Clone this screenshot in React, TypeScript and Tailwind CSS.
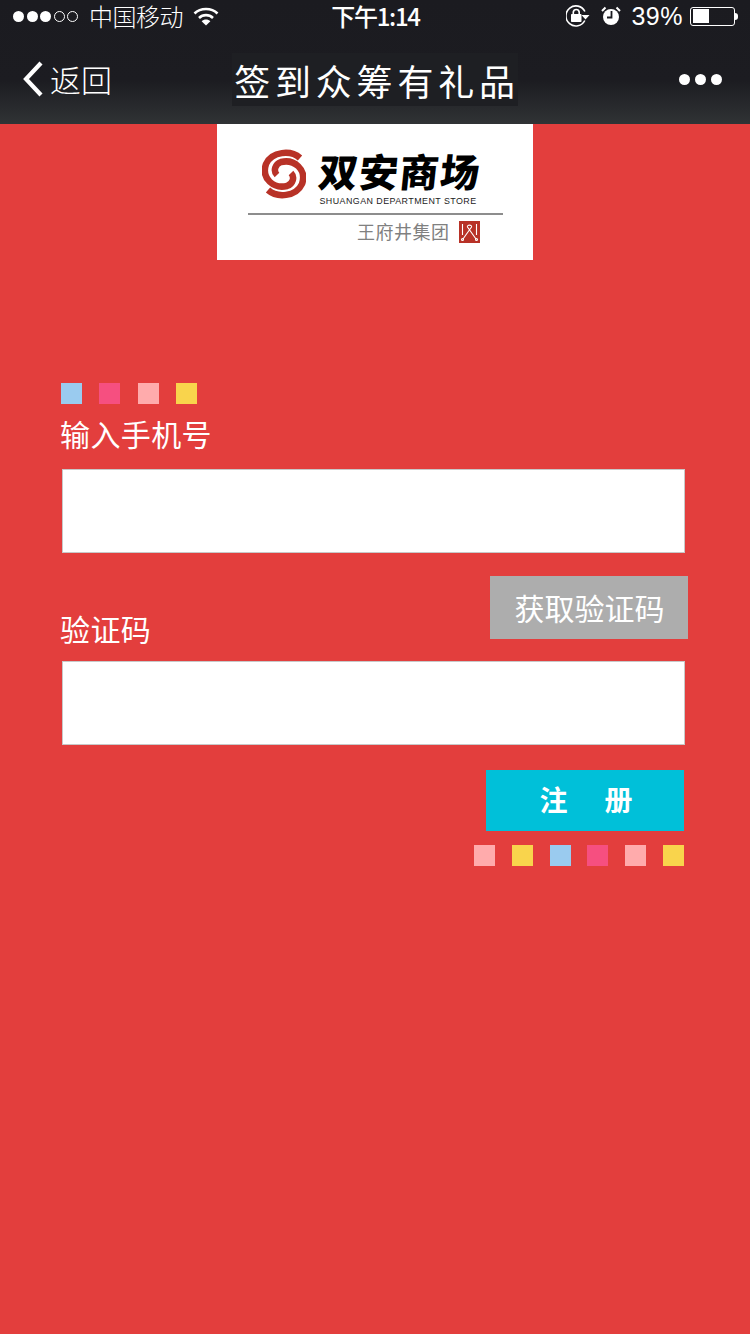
import React from 'react';

const CJK = "font-['Noto_Sans_CJK_SC','Noto_Sans',sans-serif]";

function Wifi() {
  return (
    <svg width="26" height="20" viewBox="0 0 26 20" className="text-white">
      <path d="M1.5 7.5C7.5 1.5 18.5 1.5 24.5 7.5" fill="none" stroke="currentColor" strokeWidth="2.6" />
      <path d="M6 12C10 8.2 16 8.2 20 12" fill="none" stroke="currentColor" strokeWidth="2.6" />
      <path d="M13 19.5L8.6 15.2C11 13 15 13 17.4 15.2Z" fill="currentColor" />
    </svg>
  );
}

function RotationLock() {
  return (
    <svg width="24" height="22" viewBox="0 0 24 22" className="text-white">
      <path d="M18.8 15.5A10 10 0 1 1 18.9 6.5" fill="none" stroke="currentColor" strokeWidth="1.6" />
      <path d="M15.5 10H23.5L19.5 14.5Z" fill="currentColor" />
      <rect x="5" y="9" width="10.5" height="8" rx="0.8" fill="currentColor" />
      <path d="M7.3 9V7A3 3 0 0 1 13.2 7V9" fill="none" stroke="currentColor" strokeWidth="1.6" />
    </svg>
  );
}

function Alarm() {
  return (
    <svg width="20" height="20" viewBox="0 0 20 20" className="text-white">
      <circle cx="10" cy="11" r="8" fill="currentColor" />
      <path d="M10.5 5V11.5H6" fill="none" stroke="#1b1b20" strokeWidth="1.8" />
      <path d="M1 5L4.5 1.5M19 5L15.5 1.5" stroke="currentColor" strokeWidth="2" />
    </svg>
  );
}

function Battery() {
  return (
    <div className="flex items-center">
      <div className="h-[19px] w-[45px] rounded-[3px] border border-white p-[1.5px]">
        <div className="h-full w-[16px] bg-white" />
      </div>
      <div className="h-[7px] w-[3px] rounded-r-sm bg-white" />
    </div>
  );
}

function BrandMark() {
  const arm = 'M38 9C29 1 10 2 4 15C-1 30 12 40 25 37C31 35 33 28 29 24';
  return (
    <svg width="44" height="50" viewBox="0 0 44 50" className="mt-[2px] shrink-0">
      <g fill="none" stroke="#b83227" strokeWidth="6.5">
        <path d={arm} />
        <path d={arm} transform="rotate(180 22 25)" />
      </g>
    </svg>
  );
}

function GroupBadge() {
  return (
    <svg width="21" height="22" viewBox="0 0 21 22">
      <rect width="21" height="22" fill="#b83227" />
      <g fill="none" stroke="#fff" strokeWidth="1.1">
        <path d="M3.5 3V14M17.5 3V14" />
        <path d="M4 18L12.5 6C13.5 3.5 7.5 3.5 8.5 6L17 18" />
        <circle cx="3.5" cy="18.5" r="1" />
        <circle cx="17.5" cy="18.5" r="1" />
      </g>
    </svg>
  );
}

function Logo() {
  return (
    <div className="mx-auto flex h-[136px] w-[316px] flex-col items-center bg-white pt-[23px]">
      <div className="flex h-[61px] w-[255px] gap-[13px] pl-[14px]">
        <BrandMark />
        <div className="flex w-[161px] flex-col">
          <div className={`${CJK} h-[49px] -skew-x-6 text-[39px] leading-[46px] font-black tracking-[1.5px] whitespace-nowrap text-black`}>双安商场</div>
          <div className="pl-[1px] font-['Liberation_Sans',sans-serif] text-[8.9px] leading-[10px] tracking-[0.45px] whitespace-nowrap text-[#222]">SHUANGAN DEPARTMENT STORE</div>
        </div>
      </div>
      <div className="mt-[5px] h-[2px] w-[255px] bg-[#8d8d8d]" />
      <div className="mt-[5px] flex h-[24px] w-[255px] items-center justify-end gap-[9px] pr-[23px]">
        <span className={`${CJK} mb-[2px] text-[18px] leading-[22px] tracking-[0.5px] text-[#808080]`}>王府井集团</span>
        <GroupBadge />
      </div>
    </div>
  );
}

export default function App() {
  return (
    <div className={`${CJK} flex min-h-[1334px] w-[750px] flex-col bg-[#e33e3d] text-white`}>
      {/* status bar + nav bar */}
      <header className="h-[124px] bg-[linear-gradient(to_bottom,#1b1b20_0%,#1c1c21_65%,#303335_100%)]">
        <div className="flex h-[32px] items-center pr-[12px] pl-[13px]">
          <div className="flex flex-1 items-center">
            <div className="flex gap-[2.5px]">
              <span className="h-[11px] w-[11px] rounded-full bg-white" />
              <span className="h-[11px] w-[11px] rounded-full bg-white" />
              <span className="h-[11px] w-[11px] rounded-full bg-white" />
              <span className="h-[11px] w-[11px] rounded-full border border-white" />
              <span className="h-[11px] w-[11px] rounded-full border border-white" />
            </div>
            <span className="ml-[11px] text-[24px] leading-[32px] font-light tracking-[-0.5px]">中国移动</span>
            <span className="ml-[10px]"><Wifi /></span>
          </div>
          <div className="text-[24px] leading-[32px] font-medium tracking-[-1.3px]">下午1:14</div>
          <div className="flex flex-1 items-center justify-end">
            <RotationLock />
            <span className="ml-[11px]"><Alarm /></span>
            <span className="ml-[10px] font-['Liberation_Sans',sans-serif] text-[25px] leading-[32px] tracking-[0.5px]">39%</span>
            <span className="ml-[7px]"><Battery /></span>
          </div>
        </div>
        <div className="relative mt-[2px] flex h-[90px] items-center justify-between pr-[28px] pl-[22px]">
          <div className="flex items-center">
            <svg width="22" height="36" viewBox="0 0 22 36">
              <path d="M19 2L4 18L19 34" fill="none" stroke="#fff" strokeWidth="4.2" />
            </svg>
            <span className="ml-[6px] text-[31px] leading-[40px] font-light">返回</span>
          </div>
          <h1 className="absolute top-[19px] left-[232px] flex h-[53px] w-[286px] items-center justify-center bg-[#1e1f23] pl-[4px] text-[36px] font-normal tracking-[4.8px] whitespace-nowrap">签到众筹有礼品</h1>
          <div className="flex gap-[5px]">
            <span className="h-[11px] w-[11px] rounded-full bg-white" />
            <span className="h-[11px] w-[11px] rounded-full bg-white" />
            <span className="h-[11px] w-[11px] rounded-full bg-white" />
          </div>
        </div>
      </header>

      <Logo />

      <main className="flex w-[750px] flex-col pr-[62px] pl-[61px]">
        <div className="mt-[123px] flex gap-[17.33px]">
          <span className="h-[21px] w-[21px] bg-[#9acbef]" />
          <span className="h-[21px] w-[21px] bg-[#f64f80]" />
          <span className="h-[21px] w-[21px] bg-[#ffabac]" />
          <span className="h-[21px] w-[21px] bg-[#f9d44c]" />
        </div>
        <label className="mt-[7px] ml-[-1px] h-[44px] text-[30px] leading-[44px] tracking-[0.4px]">输入手机号</label>
        <input className="mt-[14px] ml-[1px] h-[84px] w-[623px] border border-[#c8c8c8] bg-white" />
        <div className="mt-[23px] flex items-end justify-between">
          <label className="mb-[-11px] ml-[-1px] h-[44px] text-[30px] leading-[44px] tracking-[0.4px]">验证码</label>
          <button className="h-[63px] w-[198px] bg-[#adadad] pl-[1px] text-[30px] text-white">获取验证码</button>
        </div>
        <input className="mt-[22px] ml-[1px] h-[84px] w-[623px] border border-[#c8c8c8] bg-white" />
        <div className="mt-[25px] flex justify-end pr-[4px]">
          <button className="flex h-[61px] w-[198px] items-center justify-center gap-[37px] bg-[#00c0d9] pb-[4px] pl-[2px] text-[28px] font-bold">
            <span>注</span>
            <span>册</span>
          </button>
        </div>
        <div className="mt-[14px] flex justify-end gap-[16.8px] pr-[4px]">
          <span className="h-[21px] w-[21px] bg-[#ffabac]" />
          <span className="h-[21px] w-[21px] bg-[#f9d44c]" />
          <span className="h-[21px] w-[21px] bg-[#9acbef]" />
          <span className="h-[21px] w-[21px] bg-[#f64f80]" />
          <span className="h-[21px] w-[21px] bg-[#ffabac]" />
          <span className="h-[21px] w-[21px] bg-[#f9d44c]" />
        </div>
      </main>
    </div>
  );
}
